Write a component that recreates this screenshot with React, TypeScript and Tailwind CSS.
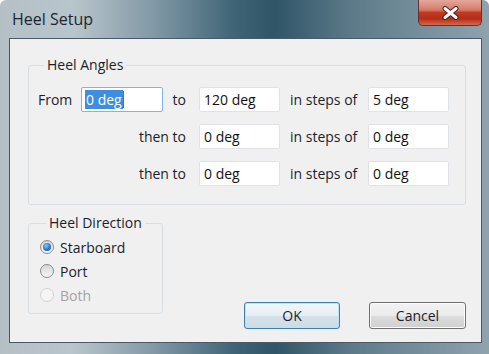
import React from "react";

function Field({ value, focused }: { value: string; focused?: boolean }) {
  if (focused) {
    return (
      <div className="h-[25px] w-full border border-[#7eb4ea] rounded-[2px] bg-white flex items-center pl-[3px] text-[14px] text-[#111]">
        <span className="bg-[#3d8ee0] text-white leading-[19px] px-[1px]">{value}</span>
        <span className="w-[1px] h-[17px] bg-[#b35a1a]" />
      </div>
    );
  }
  return (
    <div className="h-[25px] w-full border border-[#dfe3e8] rounded-[2px] bg-white flex items-center pl-[4px] text-[14px] text-[#111]">
      {value}
    </div>
  );
}

function Radio({ label, checked, disabled }: { label: string; checked?: boolean; disabled?: boolean }) {
  return (
    <div className="h-[24px] flex items-center gap-[6px]">
      <div
        className={
          "w-[14px] h-[14px] rounded-full border flex items-center justify-center " +
          (disabled
            ? "border-[#cfd1d3] bg-[#f5f5f5]"
            : "border-[#8a8c8e] bg-[linear-gradient(180deg,#d4d6d8_0%,#f7f7f7_100%)]")
        }
      >
        {checked && (
          <div className="w-[8px] h-[8px] rounded-full bg-[radial-gradient(circle_at_40%_35%,#8cc8f4_0%,#2a78c0_55%,#134a80_100%)]" />
        )}
      </div>
      <span className={"text-[14px] " + (disabled ? "text-[#a3a3a3]" : "text-[#1b1d2c]")}>{label}</span>
    </div>
  );
}

export default function App() {
  return (
    <div className="w-[489px] h-[354px] flex flex-col rounded-t-[6px] overflow-hidden font-['Open_Sans','Noto_Sans',sans-serif] bg-[linear-gradient(90deg,#b4bfc6_0%,#b9c5cc_15%,#7f97a4_32%,#3f6476_48%,#2f5567_56%,#5d7a89_72%,#8ea3ae_100%)]">
      {/* Title bar */}
      <div className="h-[38px] shrink-0 flex items-start">
        <div className="pl-[12px] pt-[8px] text-[16px] text-[#1d2630] leading-[22px]">Heel Setup</div>
        <div className="ml-auto mr-[7px] w-[64px] h-[26px] rounded-b-[5px] border border-t-0 border-[#6a3028] bg-[linear-gradient(180deg,#e3a89c_0%,#d77a66_40%,#c23a22_50%,#b52d17_75%,#d06a50_100%)] flex items-center justify-center">
          <svg width="19" height="14" viewBox="0 0 19 14">
            <path d="M4 2.5 L15 11.5 M15 2.5 L4 11.5" stroke="#4b2019" strokeWidth="5" strokeLinecap="round" fill="none" />
            <path d="M4 2.5 L15 11.5 M15 2.5 L4 11.5" stroke="#ffffff" strokeWidth="3" strokeLinecap="round" fill="none" />
          </svg>
        </div>
      </div>

      {/* Client area */}
      <div className="flex-1 ml-[9px] mr-[7px] mb-[11px] border border-[#4a5963] bg-[#f0f0f0] flex flex-col pl-[18px] pr-[15px] pb-[13px]">
        <fieldset className="mt-[17px] h-[149px] border border-[#d7dee3] rounded-[3px] pl-[9px] pt-[13px]">
          <legend className="ml-[6px] px-[3px] text-[14px] leading-[18px] text-[#1b1d2c]">Heel Angles</legend>
          <div className="grid grid-cols-[43px_82px_36px_81px_88px_81px] grid-rows-[25px_25px_25px] gap-y-[12px] items-center text-[14px] text-[#1b1d2c]">
            <div>From</div>
            <Field value="0 deg" focused />
            <div className="text-right pr-[13px]">to</div>
            <Field value="120 deg" />
            <div className="pl-[10px]">in steps of</div>
            <Field value="5 deg" />

            <div className="col-span-3 text-right pr-[13px]">then to</div>
            <Field value="0 deg" />
            <div className="pl-[10px]">in steps of</div>
            <Field value="0 deg" />

            <div className="col-span-3 text-right pr-[13px]">then to</div>
            <Field value="0 deg" />
            <div className="pl-[10px]">in steps of</div>
            <Field value="0 deg" />
          </div>
        </fieldset>

        <div className="flex-1 flex items-start mt-[9px]">
          <fieldset className="w-[135px] h-[100px] border border-[#d7dee3] rounded-[3px] pl-[11px] pt-[3px]">
            <legend className="ml-[6px] px-[3px] text-[14px] leading-[18px] text-[#1b1d2c]">Heel Direction</legend>
            <Radio label="Starboard" checked />
            <Radio label="Port" />
            <Radio label="Both" disabled />
          </fieldset>
          <div className="ml-auto self-end flex gap-[29px]">
            <div className="w-[96px] h-[27px] rounded-[3px] border border-[#3c7fb1] bg-[linear-gradient(180deg,#f1f6fa_0%,#e6eef4_50%,#d5e2ec_51%,#cddbe6_100%)] shadow-[inset_0_0_0_1px_#bfe0f7] flex items-center justify-center text-[14px] text-[#1b1d2c]">
              OK
            </div>
            <div className="w-[97px] h-[27px] rounded-[3px] border border-[#707070] bg-[linear-gradient(180deg,#f2f2f2_0%,#ebebeb_50%,#dddddd_51%,#cfcfcf_100%)] shadow-[inset_0_0_0_1px_#fbfbfb] flex items-center justify-center text-[14px] text-[#1b1d2c]">
              Cancel
            </div>
          </div>
        </div>
      </div>
    </div>
  );
}
